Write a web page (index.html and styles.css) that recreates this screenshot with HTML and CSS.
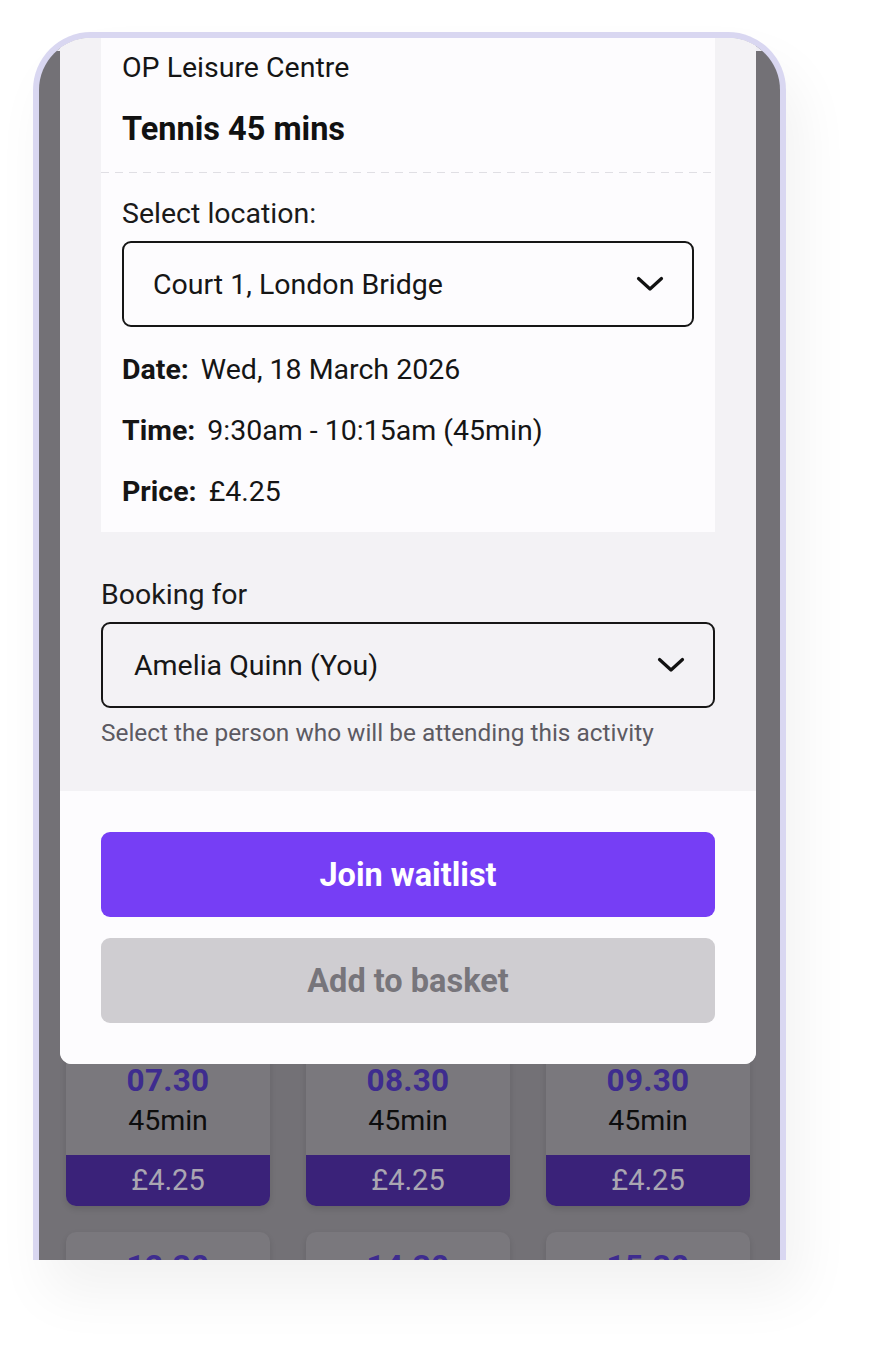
FILE: index.html
```html
<!DOCTYPE html>
<html lang="en">
<head>
<meta charset="utf-8">
<title>Booking</title>
<link rel="stylesheet" href="styles.css">
</head>
<body>
<div class="stage">
  <div class="phone">
    <div class="screen">
      <div class="topband"></div>
      <div class="backdrop">
        <div class="slots">
          <div class="slot"><div class="slot-time">07.30</div><div class="slot-dur">45min</div><div class="slot-price">£4.25</div></div>
          <div class="slot"><div class="slot-time">08.30</div><div class="slot-dur">45min</div><div class="slot-price">£4.25</div></div>
          <div class="slot"><div class="slot-time">09.30</div><div class="slot-dur">45min</div><div class="slot-price">£4.25</div></div>
          <div class="slot"><div class="slot-time">12.30</div><div class="slot-dur">45min</div><div class="slot-price">£4.25</div></div>
          <div class="slot"><div class="slot-time">14.30</div><div class="slot-dur">45min</div><div class="slot-price">£4.25</div></div>
          <div class="slot"><div class="slot-time">15.30</div><div class="slot-dur">45min</div><div class="slot-price">£4.25</div></div>
        </div>
      </div>

      <div class="modal">
        <div class="modal-body">
          <div class="info-card">
            <div class="info-head">
              <div class="venue">OP Leisure Centre</div>
              <div class="activity">Tennis 45 mins</div>
            </div>
            <div class="divider"></div>
            <div class="info-main">
              <div class="field-label">Select location:</div>
              <div class="select">
                <span>Court 1, London Bridge</span>
                <svg class="chev" viewBox="0 0 28 16" width="28" height="16"><path d="M2.5 2.5 L14 13 L25.5 2.5" fill="none" stroke="#111" stroke-width="3.2" stroke-linecap="round" stroke-linejoin="round"/></svg>
              </div>
              <div class="detail"><b>Date:</b><span>Wed, 18 March 2026</span></div>
              <div class="detail"><b>Time:</b><span>9:30am - 10:15am (45min)</span></div>
              <div class="detail"><b>Price:</b><span>£4.25</span></div>
            </div>
          </div>

          <div class="booking">
            <div class="field-label">Booking for</div>
            <div class="select">
              <span>Amelia Quinn (You)</span>
              <svg class="chev" viewBox="0 0 28 16" width="28" height="16"><path d="M2.5 2.5 L14 13 L25.5 2.5" fill="none" stroke="#111" stroke-width="3.2" stroke-linecap="round" stroke-linejoin="round"/></svg>
            </div>
            <div class="helper">Select the person who will be attending this activity</div>
          </div>
        </div>
        <div class="modal-actions">
          <button class="btn btn-primary">Join waitlist</button>
          <button class="btn btn-disabled">Add to basket</button>
        </div>
      </div>
    </div>
  </div>
</div>
</body>
</html>
```

FILE: styles.css
```css
* { box-sizing: border-box; }

html, body {
  margin: 0;
  padding: 0;
  background: #ffffff;
  font-family: Roboto, "Noto Sans", "Liberation Sans", sans-serif;
  color: #111111;
}

.stage {
  width: 882px;
  height: 1356px;
  padding: 32px 0 0 33px;
  overflow: hidden;
}

.phone {
  width: 753px;
  height: 1228px;
  border: 6px solid #d9d7f1;
  border-bottom: none;
  border-radius: 58px 58px 0 0;
  overflow: hidden;
  box-shadow: 14px 34px 56px rgba(0, 0, 0, 0.055);
  background: #737176;
}

.screen {
  position: relative;
  height: 100%;
}

.topband {
  height: 13px;
  background: #eeedf4;
}

.backdrop {
  padding: 995px 30px 0 27px;
}

.slots {
  display: grid;
  grid-template-columns: repeat(3, 204px);
  column-gap: 36px;
  row-gap: 26px;
}

.slot {
  background: #7a787d;
  border-radius: 10px;
  text-align: center;
  box-shadow: 0 3px 6px rgba(0, 0, 0, 0.12);
  padding-top: 17px;
}

.slot-time {
  font-size: 31.5px;
  line-height: 36px;
  font-weight: 700;
  color: #3e2c8f;
  letter-spacing: 0.3px;
}

.slot-dur {
  font-size: 28.5px;
  line-height: 34px;
  margin-top: 5px;
  color: #0d0d0d;
}

.slot-price {
  margin-top: 17px;
  height: 51px;
  line-height: 51px;
  font-size: 29px;
  color: #aaa6b2;
  background: #3a2279;
  border-radius: 0 0 10px 10px;
}

.modal {
  position: absolute;
  top: 0;
  left: 21px;
  width: 696px;
  border-radius: 0 0 12px 12px;
  overflow: hidden;
  background: #fdfcfe;
}

.modal-body {
  background: #f3f2f5;
  padding: 0 41px 44px;
}

.info-card {
  background: #fdfcfe;
}

.info-head {
  padding: 14px 21px 25px;
}

.venue {
  font-size: 28.5px;
  line-height: 32px;
  color: #151515;
}

.activity {
  margin-top: 27px;
  font-size: 32.5px;
  line-height: 36px;
  font-weight: 700;
}

.divider {
  height: 1px;
  background-image: linear-gradient(to right, #e0dfe4 55%, transparent 55%);
  background-size: 14px 1px;
  background-repeat: repeat-x;
}

.info-main {
  padding: 25px 21px 24px;
}

.field-label {
  font-size: 28.5px;
  line-height: 32px;
  color: #1a1a1a;
}

.select {
  margin-top: 11px;
  height: 86px;
  border: 2px solid #161616;
  border-radius: 9px;
  display: flex;
  align-items: center;
  justify-content: space-between;
  padding: 0 28px 0 29px;
  font-size: 28.5px;
  color: #161616;
}

.info-main .select {
  background: #fdfcfe;
  margin-bottom: 27px;
}

.chev {
  display: block;
  flex: none;
}

.detail {
  display: flex;
  gap: 12px;
  font-size: 28.5px;
  line-height: 32px;
  color: #151515;
}

.detail + .detail {
  margin-top: 29px;
}

.detail b {
  font-weight: 700;
}

.booking {
  padding-top: 47px;
}

.booking .select {
  padding-left: 31px;
}

.helper {
  margin-top: 11px;
  font-size: 24.4px;
  line-height: 28px;
  color: #5c5a62;
}

.modal-actions {
  background: #fdfcfe;
  padding: 41px 41px 41px;
  display: flex;
  flex-direction: column;
  gap: 21px;
}

.btn {
  display: block;
  width: 100%;
  height: 85px;
  border: none;
  border-radius: 9px;
  font-family: Roboto, "Noto Sans", "Liberation Sans", sans-serif;
  font-size: 32.5px;
  font-weight: 700;
}

.btn-primary {
  background: #763ef5;
  color: #ffffff;
}

.btn-disabled {
  background: #cfcdd1;
  color: #77757b;
}
```
